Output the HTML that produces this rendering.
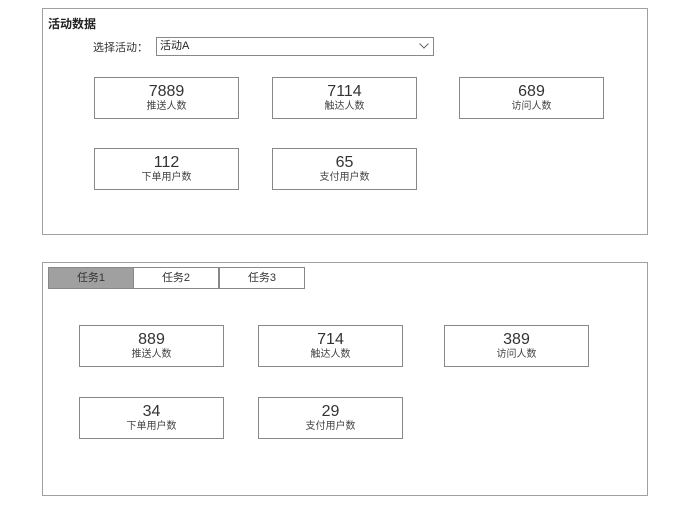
<!DOCTYPE html><html><head><meta charset="utf-8"><style>
body{margin:0;width:680px;height:515px;background:#fff;font-family:"Liberation Sans","Noto Sans CJK SC",sans-serif;position:relative;overflow:hidden}
.a{position:absolute;box-sizing:border-box}
.p{border:1px solid #a0a0a0}
.c{border:1px solid #888;text-align:center;width:145px;height:42px}
.c b{display:block;font-weight:normal;font-size:16px;color:#333;margin-top:5px;line-height:17px}
.c i{display:block;font-style:normal;font-size:10px;color:#444;line-height:14px}
.t{border:1px solid #888;height:22px;width:86px;font-size:11px;text-align:center;line-height:20px;color:#333}
</style></head><body>
<div class="a p" style="left:42px;top:8px;width:606px;height:227px"></div>
<div class="a" style="left:48px;top:15px;font-size:12px;font-weight:bold;color:#222">活动数据</div>
<div class="a" style="left:93px;top:39px;font-size:11px;color:#333">选择活动：</div>
<div class="a" style="left:156px;top:37px;width:278px;height:19px;border:1px solid #888;font-size:11px;line-height:16px;padding-left:3px;color:#222">活动A
<svg style="position:absolute;right:4px;top:5px" width="10" height="6"><path d="M0.5 0.5L5 5L9.5 0.5" fill="none" stroke="#666"/></svg></div>
<div class="a c" style="left:94px;top:77px"><b>7889</b><i>推送人数</i></div>
<div class="a c" style="left:272px;top:77px"><b>7114</b><i>触达人数</i></div>
<div class="a c" style="left:459px;top:77px"><b>689</b><i>访问人数</i></div>
<div class="a c" style="left:94px;top:148px"><b>112</b><i>下单用户数</i></div>
<div class="a c" style="left:272px;top:148px"><b>65</b><i>支付用户数</i></div>

<div class="a p" style="left:42px;top:262px;width:606px;height:234px"></div>
<div class="a t" style="left:48px;top:267px;background:#a0a0a0">任务1</div>
<div class="a t" style="left:133px;top:267px">任务2</div>
<div class="a t" style="left:219px;top:267px">任务3</div>
<div class="a c" style="left:79px;top:325px"><b>889</b><i>推送人数</i></div>
<div class="a c" style="left:258px;top:325px"><b>714</b><i>触达人数</i></div>
<div class="a c" style="left:444px;top:325px"><b>389</b><i>访问人数</i></div>
<div class="a c" style="left:79px;top:397px"><b>34</b><i>下单用户数</i></div>
<div class="a c" style="left:258px;top:397px"><b>29</b><i>支付用户数</i></div>
</body></html>
